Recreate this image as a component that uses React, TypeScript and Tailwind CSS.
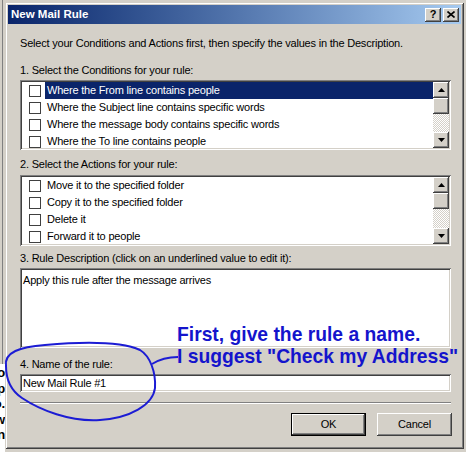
import React from "react";

const raised =
  "bg-[#d4d0c8] shadow-[inset_-1px_-1px_#404040,inset_1px_1px_#ffffff,inset_-2px_-2px_#808080]";
const sunken =
  "p-[2px] shadow-[inset_1px_1px_#808080,inset_-1px_-1px_#ffffff,inset_2px_2px_#404040,inset_-2px_-2px_#d4d0c8]";

const Arrow = ({ down }: { down?: boolean }) => (
  <svg width="7" height="4" viewBox="0 0 7 4">
    <polygon points={down ? "0,0 7,0 3.5,4" : "3.5,0 7,4 0,4"} fill="#000" />
  </svg>
);

const Scrollbar = () => (
  <div className="w-[16px] flex flex-col shrink-0">
    <div className={`${raised} h-[16px] flex items-center justify-center`}>
      <Arrow />
    </div>
    <div className={`${raised} h-[16px]`} />
    <div className="flex-1 bg-[image:repeating-conic-gradient(#ffffff_0_25%,#d4d0c8_0_50%)] bg-[length:2px_2px]" />
    <div className={`${raised} h-[16px] flex items-center justify-center`}>
      <Arrow down />
    </div>
  </div>
);

const Row = ({ label, selected }: { label: string; selected?: boolean }) => (
  <div className="flex items-center h-[17px] pl-[7px] shrink-0">
    <span className="w-[12px] h-[12px] border border-[#404040] bg-white shrink-0" />
    <span
      className={`ml-[4px] flex-1 h-[17px] leading-[17px] pl-[2px] whitespace-nowrap ${
        selected ? "bg-[#0a246a] text-white" : "text-black"
      }`}
    >
      {label}
    </span>
  </div>
);

const ListBox = ({ rows, height }: { rows: string[]; height: string }) => (
  <div className={`${sunken} bg-white flex ${height}`}>
    <div className="flex-1 flex flex-col overflow-hidden">
      {rows.map((r, i) => (
        <Row key={r} label={r} selected={i === 0 && r.startsWith("Where the From")} />
      ))}
    </div>
    <Scrollbar />
  </div>
);

const Label = ({ text, mt }: { text: string; mt: string }) => (
  <div className={`${mt} h-[13px] leading-[13px] whitespace-nowrap`}>{text}</div>
);

const Button = ({ text, isDefault }: { text: string; isDefault?: boolean }) =>
  isDefault ? (
    <div className="w-[75px] h-[23px] border border-black">
      <div className={`${raised} w-full h-full flex items-center justify-center`}>{text}</div>
    </div>
  ) : (
    <div className={`${raised} w-[75px] h-[23px] flex items-center justify-center`}>{text}</div>
  );

export default function App() {
  const conditions = [
    "Where the From line contains people",
    "Where the Subject line contains specific words",
    "Where the message body contains specific words",
    "Where the To line contains people",
  ];
  const actions = [
    "Move it to the specified folder",
    "Copy it to the specified folder",
    "Delete it",
    "Forward it to people",
  ];

  return (
    <div className="relative w-[466px] h-[452px] overflow-hidden bg-[#d4d0c8] flex font-['Liberation_Sans',Arial,sans-serif] text-[11px] tracking-[-0.2px] text-black">
      {/* strip of the window behind */}
      <div className="w-[5px] shrink-0 flex flex-col">
        <div className="h-[364px] border-l-[2px] border-l-[#d4d0c8] border-r border-r-[#808080] mr-[2px]" />
        <div className="flex-1 bg-white flex flex-col font-bold text-[13px] leading-[15.5px] pt-[1px]">
          {["to", "up", "so.", "ow", "in"].map((t) => (
            <div key={t} className="flex justify-end overflow-hidden whitespace-nowrap">
              <span>{t}</span>
            </div>
          ))}
        </div>
      </div>

      {/* dialog */}
      <div className="mt-[2px] w-[459px] h-[447px] shrink-0 p-[3px] bg-[#d4d0c8] shadow-[inset_1px_1px_#d4d0c8,inset_-1px_-1px_#404040,inset_2px_2px_#ffffff,inset_-2px_-2px_#808080] flex flex-col">
        <div className="h-[19px] shrink-0 flex items-center pl-[3px] pr-[2px] bg-gradient-to-r from-[#0a246a] to-[#a6caf0]">
          <span className="flex-1 text-white font-bold text-[11.5px] tracking-normal">New Mail Rule</span>
          <div className={`${raised} w-[16px] h-[14px] flex items-center justify-center font-bold text-[11px] leading-none tracking-normal`}>
            ?
          </div>
          <div className={`${raised} ml-[2px] w-[16px] h-[14px] flex items-center justify-center`}>
            <svg width="8" height="7" viewBox="0 0 8 7">
              <path d="M0.5 0.5 L7.5 6.5 M7.5 0.5 L0.5 6.5" stroke="#000" strokeWidth="1.6" />
            </svg>
          </div>
        </div>

        <div className="flex-1 flex flex-col pl-[12px] pr-[10px]">
          <Label
            mt="mt-[13px]"
            text="Select your Conditions and Actions first, then specify the values in the Description."
          />
          <Label mt="mt-[14px]" text="1. Select the Conditions for your rule:" />
          <div className="mt-[3px]">
            <ListBox rows={conditions} height="h-[70px]" />
          </div>
          <Label mt="mt-[8px]" text="2. Select the Actions for your rule:" />
          <div className="mt-[4px]">
            <ListBox rows={actions} height="h-[71px]" />
          </div>
          <Label mt="mt-[6px]" text="3. Rule Description (click on an underlined value to edit it):" />
          <div className={`mt-[3px] h-[80px] bg-white ${sunken}`}>
            <div className="pt-[3px] pl-[1px] leading-[14px] whitespace-nowrap">
              Apply this rule after the message arrives
            </div>
          </div>
          <Label mt="mt-[10px]" text="4. Name of the rule:" />
          <div className={`mt-[3px] h-[18px] bg-white ${sunken} flex items-center`}>
            <span className="pl-[1px] whitespace-nowrap">New Mail Rule #1</span>
          </div>
          <div className="mt-[10px] h-[2px] border-t border-t-[#808080] border-b border-b-white" />
          <div className="mt-[9px] flex justify-end gap-[11px] -mr-px">
            <Button text="OK" isDefault />
            <Button text="Cancel" />
          </div>
        </div>
      </div>

      <div className="flex-1" />

      {/* hand-drawn annotation */}
      <svg className="absolute inset-0 pointer-events-none" width="466" height="452" viewBox="0 0 466 452">
        <path
          d="M6 366 C4 352 20 347 45 345 C80 342 120 341 140 350 C150 356 156 372 155 388 C153 405 130 418 100 420 C70 422 40 410 22 398 C10 390 6 378 6 366 Z"
          fill="none"
          stroke="#1c1cd4"
          strokeWidth="2"
        />
        <path d="M152 364 C160 359 170 357 178 357" fill="none" stroke="#1c1cd4" strokeWidth="2" />
      </svg>
      <div className="absolute left-[177px] top-[324px] text-[#1414cc] font-bold text-[19.3px] leading-[22px] tracking-normal whitespace-nowrap">
        <div>First, give the rule a name.</div>
        <div>I suggest "Check my Address"</div>
      </div>
    </div>
  );
}
